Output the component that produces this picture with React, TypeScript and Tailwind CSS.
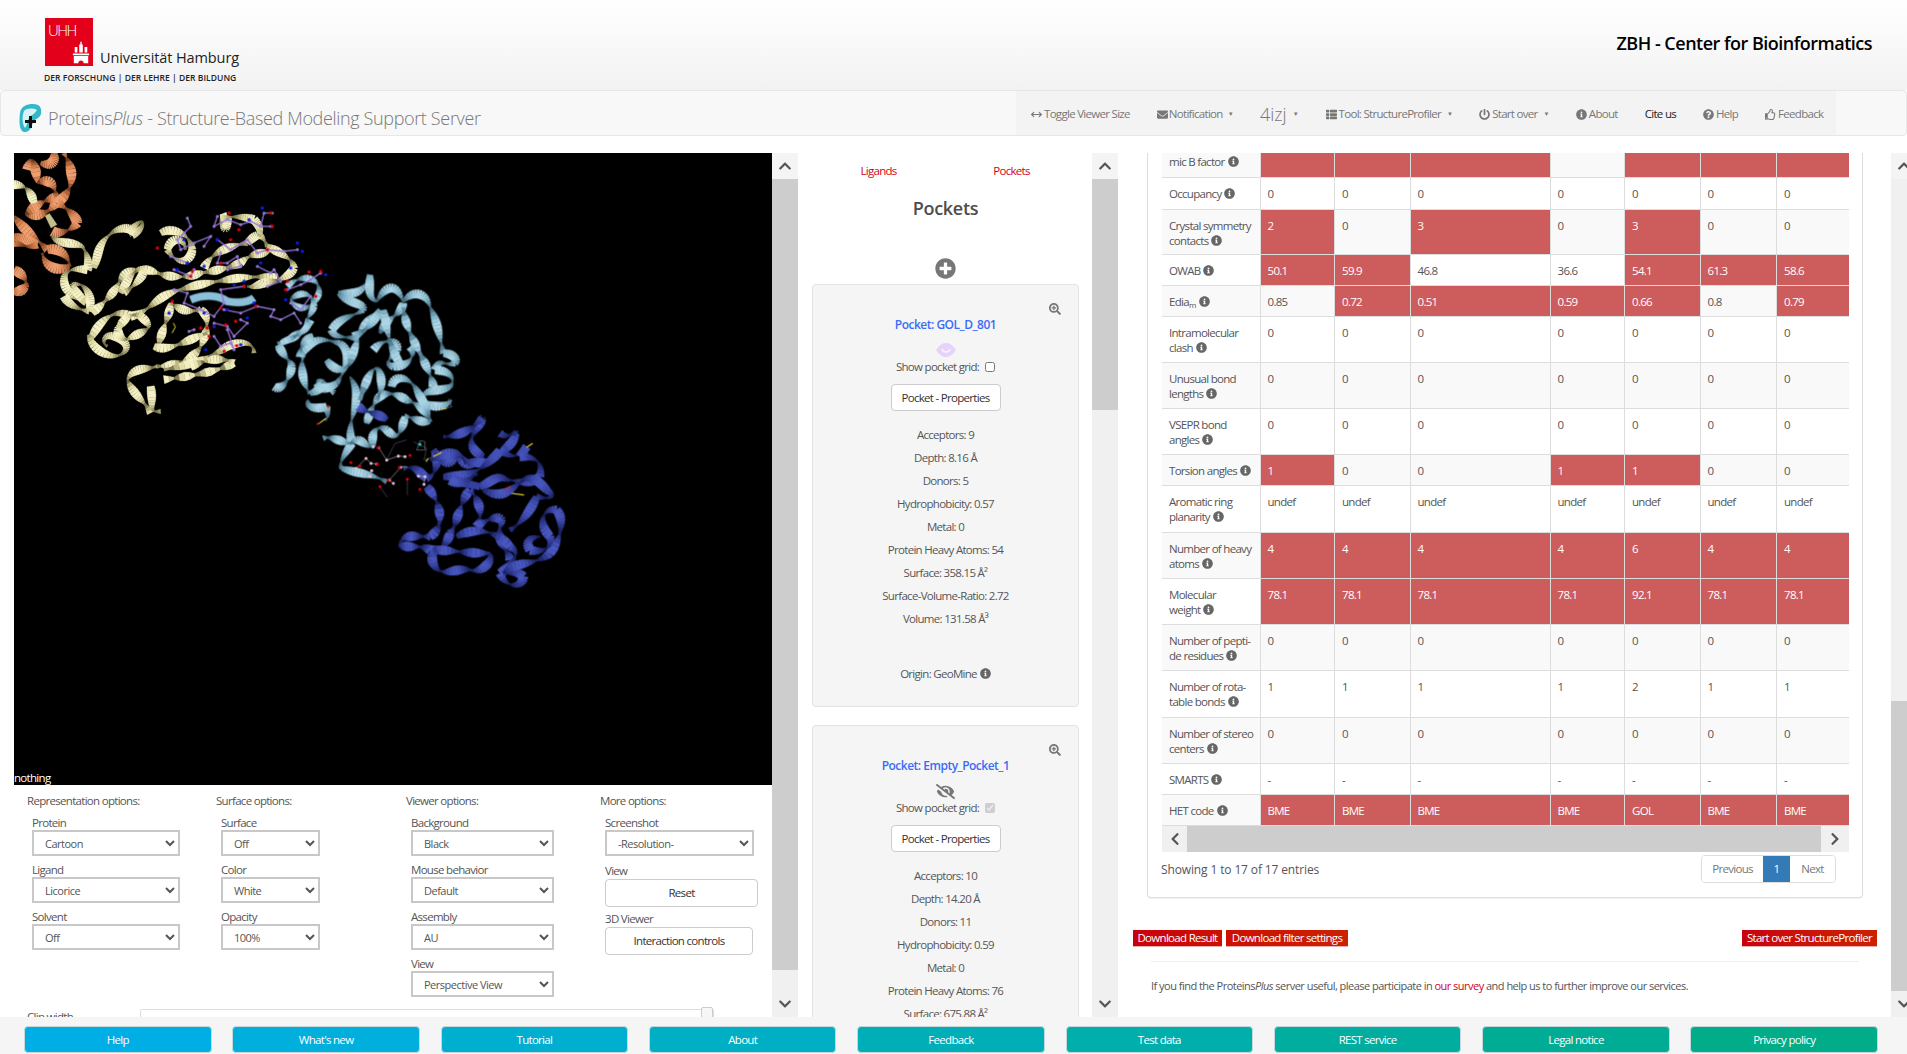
import {
  FaChevronDown,
  FaChevronLeft,
  FaChevronRight,
  FaChevronUp,
  FaEnvelope,
  FaEyeSlash,
  FaInfoCircle,
  FaPlusCircle,
  FaPowerOff,
  FaQuestionCircle,
  FaRegThumbsUp,
  FaSearchPlus,
  FaThList,
} from "react-icons/fa";
import { TbArrowsHorizontal } from "react-icons/tb";

type Row = { label: React.ReactNode; h: string; vals: string[]; red: number[]; odd: boolean };

const all = [0, 1, 2, 3, 4, 5, 6];
const zeros = ["0", "0", "0", "0", "0", "0", "0"];

const rows: Row[] = [
  { label: "mic B factor", h: "h-[24px]", vals: ["", "", "", "", "", "", ""], red: [0, 1, 2, 4, 5, 6], odd: true },
  { label: "Occupancy", h: "h-[32px]", vals: zeros, red: [], odd: false },
  { label: <>Crystal symmetry<br />contacts</>, h: "h-[45px]", vals: ["2", "0", "3", "0", "3", "0", "0"], red: [0, 2, 4], odd: true },
  { label: "OWAB", h: "h-[31px]", vals: ["50.1", "59.9", "46.8", "36.6", "54.1", "61.3", "58.6"], red: [0, 1, 4, 5, 6], odd: false },
  { label: <>Edia<sub className="text-[8px]">m</sub></>, h: "h-[31px]", vals: ["0.85", "0.72", "0.51", "0.59", "0.66", "0.8", "0.79"], red: [1, 2, 3, 4, 6], odd: true },
  { label: <>Intramolecular<br />clash</>, h: "h-[46px]", vals: zeros, red: [], odd: false },
  { label: <>Unusual bond<br />lengths</>, h: "h-[46px]", vals: zeros, red: [], odd: true },
  { label: <>VSEPR bond<br />angles</>, h: "h-[46px]", vals: zeros, red: [], odd: false },
  { label: "Torsion angles", h: "h-[31px]", vals: ["1", "0", "0", "1", "1", "0", "0"], red: [0, 3, 4], odd: true },
  { label: <>Aromatic ring<br />planarity</>, h: "h-[47px]", vals: ["undef", "undef", "undef", "undef", "undef", "undef", "undef"], red: [], odd: false },
  { label: <>Number of heavy<br />atoms</>, h: "h-[46px]", vals: ["4", "4", "4", "4", "6", "4", "4"], red: all, odd: true },
  { label: <>Molecular<br />weight</>, h: "h-[46px]", vals: ["78.1", "78.1", "78.1", "78.1", "92.1", "78.1", "78.1"], red: all, odd: false },
  { label: <>Number of pepti-<br />de residues</>, h: "h-[46px]", vals: zeros, red: [], odd: true },
  { label: <>Number of rota-<br />table bonds</>, h: "h-[47px]", vals: ["1", "1", "1", "1", "2", "1", "1"], red: [], odd: false },
  { label: <>Number of stereo<br />centers</>, h: "h-[46px]", vals: zeros, red: [], odd: true },
  { label: "SMARTS", h: "h-[31px]", vals: ["-", "-", "-", "-", "-", "-", "-"], red: [], odd: false },
  { label: "HET code", h: "h-[31px]", vals: ["BME", "BME", "BME", "BME", "GOL", "BME", "BME"], red: all, odd: true },
];

const footerLinks = [
  { label: "Help", bg: "bg-[#00aee6]" },
  { label: "What's new", bg: "bg-[#00afdc]" },
  { label: "Tutorial", bg: "bg-[#00afd0]" },
  { label: "About", bg: "bg-[#00afc4]" },
  { label: "Feedback", bg: "bg-[#00aeb8]" },
  { label: "Test data", bg: "bg-[#00aeac]" },
  { label: "REST service", bg: "bg-[#00ad9f]" },
  { label: "Legal notice", bg: "bg-[#00ad94]" },
  { label: "Privacy policy", bg: "bg-[#00ad88]" },
];

type Palette = { dark: number[]; body: number[]; light: number[] };
const orange: Palette = { dark: [110, 58, 30], body: [210, 124, 76], light: [240, 160, 112] };
const yellow: Palette = { dark: [110, 106, 66], body: [222, 217, 162], light: [247, 243, 200] };
const sky: Palette = { dark: [58, 94, 112], body: [128, 179, 201], light: [173, 215, 232] };
const navy: Palette = { dark: [24, 30, 88], body: [51, 62, 154], light: [74, 88, 194] };

const orangeTraces = [
  "M40 50 C50 10 60 0 70 90 C110 70 130 100 125 150 C100 190 50 190 35 185 C70 150 100 140 120 135",
  "M150 0 C185 60 180 110 130 150 C170 170 190 200 190 210 C170 235 130 245 115 235",
  "M0 190 C30 230 70 260 100 290 C130 280 170 310 165 340 C130 360 90 340 85 300",
  "M0 250 C30 255 50 270 70 275 C40 290 20 270 0 270",
  "M0 350 C30 365 40 385 35 400 C20 420 5 415 0 415",
  "M120 0 C125 30 110 40 80 30",
];

const yellowTraces = [
  "M0 95 C30 95 50 110 60 150",
  "M100 185 L120 220",
  "M115 250 C130 275 170 265 205 280 C225 310 225 340 220 350 C180 345 150 350 150 380 C150 420 190 440 215 450 C170 400 165 390 200 395 C225 410 235 440 225 475 C190 470 160 450 150 430",
  "M240 345 C255 300 250 270 300 235 C330 220 360 225 345 240 C340 250 365 205 385 205 C390 220 370 240 355 245",
  "M235 480 C280 440 300 420 320 380 C340 345 380 340 430 360 C470 375 520 375 560 360 C600 355 640 345 680 330 C720 290 750 310 770 290",
  "M320 420 C340 380 370 340 385 350 C400 360 360 400 330 420",
  "M230 560 C250 510 300 460 350 490 C400 480 420 440 470 420 C520 400 580 390 640 380 C700 370 760 370 790 375",
  "M225 545 C230 590 290 620 320 605 C350 590 340 560 300 550 C270 540 260 570 280 580",
  "M310 530 C340 480 370 470 400 510 C420 530 370 540 340 560 C320 560 300 530 320 520",
  "M570 345 C590 300 640 280 700 270 C730 240 740 235 760 280 C800 300 840 320 840 345 C830 370 790 385 750 390 C730 395 720 405 700 400",
  "M440 240 C470 220 530 240 535 290 C530 330 490 340 460 290 C470 250 510 250 515 290",
  "M620 190 C630 240 640 240 640 190 M620 195 C660 190 690 190 720 200 C740 220 740 240 735 250",
  "M430 590 C440 540 470 480 470 450 C500 470 520 480 560 470 C590 490 580 540 560 580 C540 620 480 640 430 640",
  "M430 640 C400 650 360 640 340 680 C360 730 390 740 410 780",
  "M410 700 C420 760 400 780 440 775",
  "M450 650 C520 640 600 610 640 580 C690 560 720 570 720 600",
  "M450 680 C520 670 600 660 660 630 C620 610 580 620 530 640",
  "M420 580 C460 600 520 560 580 540",
];

const skyOverTraces = [
  "M820 400 C860 360 920 370 915 420 C900 470 850 480 830 440 C860 410 900 420 900 460 C890 490 870 500 885 510 C880 530 850 550 800 570",
];

const ligandLines = [
  "M470 310 L520 330",
  "M520 195 L530 220 L510 240 L490 260 L500 290 L540 270 L590 250 L570 280",
  "M610 190 L600 220 L640 200 L680 215 L710 205 L740 220 L750 180 L775 180",
  "M740 220 L770 220",
  "M610 260 L650 290 L700 260 L730 300 L760 290 L810 295 L850 290",
  "M620 300 L610 330 L640 330 L670 310 L680 340 L640 350",
  "M730 340 L770 360 L780 350 L800 385 L760 400",
  "M480 350 L530 370 L540 350",
  "M480 410 L520 420 L510 450 L560 470 L600 490 L630 450 L620 410 L690 400",
  "M630 470 L680 480 L730 460 L780 470 L770 490 L800 500 L840 480 L860 510",
  "M820 410 L860 395 L890 380 L920 360",
  "M830 450 L860 470 L890 430",
  "M600 510 L640 520 L660 550 L700 510 L680 500",
  "M600 550 L620 580 L650 570 L660 590 L640 530",
  "M525 535 L540 530",
];

const redDots = [
  [430, 285], [535, 355], [620, 330], [645, 180], [675, 230], [770, 180], [775, 220], [760, 290], [820, 385],
  [885, 357], [920, 355], [475, 445], [620, 465], [580, 525], [600, 520], [635, 515], [665, 505], [630, 595],
  [668, 578], [585, 550], [725, 460], [690, 400], [815, 410], [905, 430], [560, 525], [650, 260], [530, 370],
];

const blueDots = [
  [745, 165], [850, 270], [865, 295], [705, 200], [610, 260], [520, 330], [510, 260], [830, 345], [690, 385],
  [570, 340], [740, 330], [570, 480], [600, 520], [640, 470], [700, 495], [720, 450], [680, 575], [935, 365],
  [815, 440], [575, 590], [490, 350], [465, 480], [660, 395],
];

const skyTraces = [
  "M120 180 C110 210 60 240 25 255 C40 290 65 305 65 320 C60 360 30 395 12 380",
  "M100 285 C90 320 100 380 120 400 C160 390 170 360 140 365 C170 380 195 385 180 395",
  "M115 420 C105 440 135 450 170 440 C170 455 180 470 165 480",
  "M90 290 C130 220 170 240 210 250 C240 270 240 310 200 370 C170 390 150 390 140 370",
  "M130 230 C100 240 90 260 90 290",
  "M170 300 C190 330 220 340 240 310 C260 250 270 190 330 150 C310 190 290 210 250 230",
  "M205 100 C240 100 280 110 300 45 C300 80 290 110 320 125 C350 70 380 70 400 125 C430 85 470 100 480 140 C500 180 510 230 520 280 C550 280 565 300 555 310 C520 320 510 290 495 330 C540 330 560 360 540 380 C500 400 470 380 450 420 C470 440 520 450 545 420",
  "M205 100 C230 130 290 130 280 150 C250 170 210 170 185 210 C190 235 230 230 260 235",
  "M330 220 C350 170 390 170 400 130 C400 190 430 240 460 300 C480 340 490 370 490 380",
  "M310 270 C340 230 390 240 380 270 C360 300 340 310 370 320 C420 320 440 280 420 260",
  "M340 150 C350 200 360 270 390 310",
  "M240 350 C270 400 260 420 245 480 C240 510 240 520 245 550 C220 590 205 610 215 625 C260 640 300 640 350 665",
  "M160 535 C180 525 220 550 245 550 C270 520 290 570 310 560 C300 520 320 490 350 510 C380 540 390 530 405 470 C430 470 450 490 480 485 C470 450 440 430 410 420 C380 400 340 390 320 420 C300 450 290 490 290 490",
  "M270 420 C300 320 320 310 330 340 C340 380 330 400 320 420",
  "M365 380 C370 340 420 350 440 390 C460 430 480 450 480 485",
];

const navyTraces = [
  "M265 440 C290 460 330 460 350 480",
  "M400 625 C440 615 450 640 470 655 C500 650 510 590 490 570 C520 620 550 620 560 570 C580 630 610 620 640 590 C600 570 590 540 630 490 C640 470 640 470 610 500 C580 520 550 530 520 530",
  "M480 600 C530 580 560 560 590 610 C620 600 640 620 670 600 C700 560 720 570 740 520 C735 510 715 540 690 520",
  "M520 650 C580 650 610 640 640 620 C660 600 680 590 690 570 C720 590 740 600 770 560 M750 590 C790 590 820 600 810 650 C770 680 750 660 710 660 C680 640 660 670 630 680 M540 660 C570 680 600 660 620 640",
  "M470 680 C510 720 530 800 480 830 C440 830 400 820 390 850 C400 870 450 850 480 870 C500 870 530 860 540 820 C560 800 570 720 600 690 C630 720 640 770 620 800 C660 770 710 760 690 800 C680 850 720 880 720 900",
  "M490 870 C540 870 590 880 660 880 C670 900 640 940 600 930 C560 920 510 960 490 910 C480 890 490 880 500 870",
  "M560 830 C610 800 680 810 720 860 C760 880 720 920 690 940 C710 990 760 980 760 950 C740 930 720 940 700 940 C740 900 790 920 840 880 C880 830 880 770 860 750 C820 740 800 790 840 830 C850 860 820 880 780 870 C760 840 790 830 810 830",
  "M640 690 C700 720 720 690 760 660 C790 640 820 680 830 690 C860 710 840 720 800 710 C780 760 740 800 720 810",
];

const pinkDots = [
  [258, 625], [288, 595], [303, 610], [320, 612], [305, 632], [300, 648], [326, 563], [350, 600], [385, 588],
  [405, 590], [445, 648], [465, 650], [462, 673], [370, 670], [358, 660], [392, 622], [310, 560],
];
const intRed = [
  [243, 608], [270, 618], [322, 612], [330, 680], [412, 657], [355, 660], [388, 622], [450, 688], [325, 563], [420, 586],
];

// walk an M/L/C path and return points spaced along it
function samplePath(d: string): number[][] {
  const tokens = d.match(/[MLC]|-?[\d.]+/g) ?? [];
  const pts: number[][] = [];
  let i = 0;
  let cmd = "M";
  let x = 0;
  let y = 0;
  while (i < tokens.length) {
    if (/[MLC]/.test(tokens[i])) cmd = tokens[i++];
    if (cmd === "C") {
      const [x1, y1, x2, y2, x3, y3] = tokens.slice(i, i + 6).map(Number);
      i += 6;
      for (let s = 1; s <= 14; s++) {
        const t = s / 14;
        const u = 1 - t;
        pts.push([
          u * u * u * x + 3 * u * u * t * x1 + 3 * u * t * t * x2 + t * t * t * x3,
          u * u * u * y + 3 * u * u * t * y1 + 3 * u * t * t * y2 + t * t * t * y3,
        ]);
      }
      x = x3;
      y = y3;
    } else {
      x = Number(tokens[i++]);
      y = Number(tokens[i++]);
      pts.push([x, y]);
    }
  }
  return pts;
}

function mix(a: number[], b: number[], t: number) {
  return `rgb(${a.map((v, i) => Math.round(v + (b[i] - v) * t)).join(",")})`;
}

// twisted cartoon strand: width and shade follow a cosine along the trace
function Ribbons({ traces, color, w }: { traces: string[]; color: Palette; w: number }) {
  const quads: { d: string; fill: string }[] = [];
  traces.forEach((trace, index) => {
    const pts = samplePath(trace);
    const period = 70 + (index % 4) * 22;
    let run = index * 31;
    for (let i = 0; i < pts.length - 1; i++) {
      const [ax, ay] = pts[i];
      const [bx, by] = pts[i + 1];
      const len = Math.hypot(bx - ax, by - ay) || 1;
      const nx = -(by - ay) / len;
      const ny = (bx - ax) / len;
      const c0 = Math.abs(Math.cos((run / period) * Math.PI));
      run += len;
      const c1 = Math.abs(Math.cos((run / period) * Math.PI));
      const w0 = 2 + w * c0;
      const w1 = 2 + w * c1;
      const shade = c0 > 0.65 ? mix(color.body, color.light, (c0 - 0.65) / 0.35) : mix(color.dark, color.body, c0 / 0.65);
      quads.push({
        d: `M${ax + nx * w0} ${ay + ny * w0} L${bx + nx * w1} ${by + ny * w1} L${bx - nx * w1} ${by - ny * w1} L${ax - nx * w0} ${ay - ny * w0} Z`,
        fill: shade,
      });
    }
  });
  return (
    <g>
      {quads.map((q, i) => (
        <path key={i} d={q.d} fill={q.fill} stroke={q.fill} strokeWidth="1" />
      ))}
    </g>
  );
}

function Molecule() {
  return (
    <svg viewBox="0 0 758 632" className="block h-full w-full">
      <defs>
        <filter id="soft">
          <feGaussianBlur stdDeviation="0.35" />
        </filter>
      </defs>
      <g filter="url(#soft)">
        <g transform="scale(0.3333)">
          <Ribbons traces={orangeTraces} color={orange} w={13} />
          <Ribbons traces={yellowTraces} color={yellow} w={11} />
        </g>
        <g transform="translate(256 107) scale(0.3333)">
          <Ribbons traces={skyTraces} color={sky} w={11} />
          <Ribbons traces={navyTraces} color={navy} w={12} />
          <g fill="none" stroke="#a9a59b" strokeWidth="2">
            <path d="M258 625 L288 595 L303 610 L320 612 M305 632 L300 648 M326 563 L350 600 L385 588 L405 590 M445 648 L465 650 L462 673 M370 670 L358 660 L392 622 L412 620" />
            <path d="M350 600 L375 550 L410 540 M430 545 L470 565 L462 600 L490 590 M330 680 L352 712 M412 657 L412 705" stroke="#5a4f66" />
            <path d="M515 448 L545 440 L535 415 M450 542 L440 570 L465 570 L465 545 Z" stroke="#79808c" />
          </g>
          {pinkDots.map(([x, y]) => <circle key={`${x}-${y}`} cx={x} cy={y} r="4.5" fill="#e6c4e2" />)}
          {intRed.map(([x, y]) => <circle key={`${x}-${y}`} cx={x} cy={y} r="4.5" fill="#e3000f" />)}
          <circle cx="450" cy="553" r="4.5" fill="#1ecfd0" />
          <path d="M145 492 L168 475 M490 590 L515 577 M468 605 L475 595 M770 562 L788 550 M725 700 L762 705 M515 448 L530 445" stroke="#e6d436" strokeWidth="3.5" fill="none" />
          <path d="M140 494 L150 487 M705 692 L720 678" stroke="#d22a1c" strokeWidth="3.5" />
          <circle cx="175" cy="440" r="4" fill="#d22a1c" />
        </g>
        <g transform="scale(0.3333)">
          <path d="M530 440 C580 420 620 430 640 445 C670 450 700 450 720 435" fill="none" stroke="#4d7a90" strokeWidth="25" />
          <path d="M530 440 C580 420 620 430 640 445 C670 450 700 450 720 435" fill="none" stroke="#8cc0d8" strokeWidth="21" />
          <Ribbons traces={skyOverTraces} color={sky} w={8} />
          <g fill="none" stroke="#9170d2" strokeWidth="4">
            {ligandLines.map((d) => <path key={d} d={d} />)}
          </g>
          {ligandLines.flatMap((d) => samplePath(d)).map(([x, y], i) => <circle key={i} cx={x} cy={y} r="4.5" fill="#9a7bdc" />)}
          {redDots.map(([x, y]) => <circle key={`${x}-${y}`} cx={x} cy={y} r="5" fill="#e00012" />)}
          {blueDots.map(([x, y]) => <circle key={`${x}-${y}`} cx={x} cy={y} r="5" fill="#0c1be6" />)}
          <path d="M478 510 L484 522 L474 540" stroke="#eadb32" strokeWidth="3" fill="none" />
        </g>
      </g>
    </svg>
  );
}

function Scrollbar({ before, thumb }: { before: string; thumb: string }) {
  return (
    <div className="flex h-full w-[26px] shrink-0 flex-col bg-[#f0f0f0]">
      <div className="flex h-[26px] shrink-0 items-center justify-center bg-[#f4f4f4]">
        <FaChevronUp className="text-[14px] text-[#555]" />
      </div>
      <div className={before} />
      <div className={`${thumb} bg-[#cdcdcd]`} />
      <div className="flex-1" />
      <div className="flex h-[26px] shrink-0 items-center justify-center bg-[#f0f0f0]">
        <FaChevronDown className="text-[14px] text-[#555]" />
      </div>
    </div>
  );
}

function Info() {
  return <FaInfoCircle className="ml-[3px] inline-block align-[-1px] text-[11px] text-[#666]" />;
}

function Field({ label, value, w }: { label: string; value: string; w: string }) {
  return (
    <div className="mb-[7px] pl-[5px]">
      <div className="h-[14px] leading-[14px]">{label}</div>
      <select className={`${w} block h-[26px] rounded-none border-2 border-[#c8c8c8] bg-white pl-[7px] text-[11px] tracking-[-0.5px] text-[#555]`} defaultValue={value}>
        <option>{value}</option>
      </select>
    </div>
  );
}

function Pocket({ title, eye, checked, stats }: { title: string; eye: "open" | "closed"; checked: boolean; stats: string[] }) {
  return (
    <div className="relative mb-[18px] w-[267px] rounded-[4px] border border-[#e3e3e3] bg-[#f5f5f5] pt-[32px] pb-[21px] text-center">
      <FaSearchPlus className="absolute top-[18px] right-[17px] text-[12px] text-[#777]" />
      <div className="h-[16px] text-[12px] leading-[16px] font-semibold tracking-[-0.5px] text-[#3b6cf6]">{title}</div>
      <div className="mt-[8px] flex h-[18px] items-center justify-center">
        {eye === "open" ? (
          <svg width="20" height="14" viewBox="0 0 20 14">
            <path d="M0 7 C4 1 7 0 10 0 C13 0 16 1 20 7 C16 13 13 14 10 14 C7 14 4 13 0 7 Z" fill="#e5d3fb" />
            <path d="M6 6 C7 10 13 10 14 6" fill="none" stroke="#f5f5f5" strokeWidth="1.5" />
          </svg>
        ) : (
          <FaEyeSlash className="text-[19px] text-[#777]" />
        )}
      </div>
      <div className="flex h-[16px] items-center justify-center gap-[6px] leading-[16px]">
        Show pocket grid:
        <input type="checkbox" readOnly checked={checked} disabled={checked} className="h-[10px] w-[10px]" />
      </div>
      <button className="mx-auto mt-[9px] block h-[27px] w-[110px] rounded-[4px] border border-[#ccc] bg-white text-[#333]">Pocket - Properties</button>
      <div className="mt-[12px]">
        {stats.map((s) => (
          <div key={s} className="h-[23px] leading-[23px]">{s}</div>
        ))}
      </div>
      <div className="mt-[32px] h-[23px] leading-[23px]">Origin: GeoMine<Info /></div>
    </div>
  );
}

export default function App() {
  return (
    <div className="flex h-screen w-full flex-col overflow-hidden bg-white font-['Open_Sans',sans-serif] text-[11.5px] tracking-[-0.7px] whitespace-nowrap text-[#555]">
      {/* University header */}
      <header className="flex h-[90px] shrink-0 justify-between bg-gradient-to-b from-white to-[#f2f2f2] pt-[18px] pr-[35px] pl-[45px]">
        <div>
          <div className="flex items-end">
            <div className="relative h-[48px] w-[48px] bg-[#e2001a]">
              <span className="absolute top-[1px] left-[3px] text-[15px] font-light tracking-[-1.5px] text-white">UHH</span>
              <svg viewBox="0 0 20 24" className="absolute right-[3px] bottom-[2px] h-[23px] w-[18px]" fill="white">
                <path d="M1 13 H19 V15 H1 Z M2 16 H18 V24 H13 C13 20 7 20 7 24 H2 Z M9.2 0 H10.8 V3 H12 V12 H8 V3 H9.2 Z M3 6 H6 V12 H3 Z M14 6 H17 V12 H14 Z" />
              </svg>
            </div>
            <span className="ml-[7px] text-[14.5px] leading-[17px] tracking-[-0.1px] text-[#222]">Universität Hamburg</span>
          </div>
          <div className="mt-[6px] -ml-[1px] text-[8.5px] font-semibold tracking-[0.05px] text-[#222]">DER FORSCHUNG | DER LEHRE | DER BILDUNG</div>
        </div>
        <div className="pt-[14px] text-[18px] leading-[22px] font-semibold tracking-[-0.5px] text-black">ZBH - Center for Bioinformatics</div>
      </header>

      {/* Navbar */}
      <nav className="flex h-[46px] shrink-0 rounded-[4px] border border-[#e7e7e7] bg-[#f8f8f8] pr-[70px]">
        <div className="flex items-center pt-[10px] pl-[17px]">
          <svg viewBox="0 0 24 29" className="h-[29px] w-[24px]">
            <path d="M2 9 C3 2 9 0 15 0 C22 0 24 4 23 10 C22 14 17 15 15 18 C14 23 11 29 6 28 C1 27 1 16 2 9 Z" fill="#34b7c9" />
            <path d="M6 7 C9 4 15 4 19 6 C17 10 13 11 11 14 C9 18 9 22 7 24 C4 20 4 12 6 7 Z" fill="#d6f3f7" />
            <path d="M11 12 H14 V16 H18 V19 H14 V24 H11 V19 H7 V16 H11 Z" fill="#111" />
          </svg>
          <span className="ml-[6px] text-[18px] font-light tracking-[-0.35px] text-[#777]">
            Proteins<i>Plus</i> - Structure-Based Modeling Support Server
          </span>
        </div>
        <div className="ml-auto flex w-[820px] items-center gap-[27px] bg-[#f3f3f3] pt-[2px] pl-[14px] text-[#777]">
          <span className="flex items-center gap-[1px]"><TbArrowsHorizontal className="text-[13px]" />Toggle Viewer Size</span>
          <span className="flex items-center gap-[1px]"><FaEnvelope className="text-[11px]" />Notification <small className="ml-[4px] text-[6px]">▼</small></span>
          <span className="flex items-center text-[18px] font-light tracking-normal">4izj <small className="ml-[6px] text-[6px]">▼</small></span>
          <span className="flex items-center gap-[2px]"><FaThList className="text-[11px]" />Tool: StructureProfiler <small className="ml-[4px] text-[6px]">▼</small></span>
          <span className="flex items-center gap-[2px]"><FaPowerOff className="text-[11px]" />Start over <small className="ml-[4px] text-[6px]">▼</small></span>
          <span className="flex items-center gap-[2px]"><FaInfoCircle className="text-[11px]" />About</span>
          <span className="text-[#222]">Cite us</span>
          <span className="flex items-center gap-[2px]"><FaQuestionCircle className="text-[11px]" />Help</span>
          <span className="flex items-center gap-[2px]"><FaRegThumbsUp className="text-[11px]" />Feedback</span>
        </div>
      </nav>

      {/* Three scrolling panels */}
      <main className="mt-[17px] flex h-[864px] shrink-0 overflow-hidden pl-[14px]">
        <section className="w-[758px] shrink-0 overflow-hidden">
          <div className="relative h-[632px] bg-black">
            <Molecule />
            <span className="absolute bottom-0 left-0 leading-[14px] text-white">nothing</span>
          </div>
          <div className="grid grid-cols-[189px_190px_194px_1fr] pt-[8px] pl-[13px]">
            <div>
              <div className="mb-[8px] h-[15px] leading-[16px]">Representation options:</div>
              <Field label="Protein" value="Cartoon" w="w-[148px]" />
              <Field label="Ligand" value="Licorice" w="w-[148px]" />
              <Field label="Solvent" value="Off" w="w-[148px]" />
            </div>
            <div>
              <div className="mb-[8px] h-[15px] leading-[16px]">Surface options:</div>
              <Field label="Surface" value="Off" w="w-[99px]" />
              <Field label="Color" value="White" w="w-[99px]" />
              <Field label="Opacity" value="100%" w="w-[99px]" />
            </div>
            <div>
              <div className="mb-[8px] h-[15px] leading-[16px]">Viewer options:</div>
              <Field label="Background" value="Black" w="w-[143px]" />
              <Field label="Mouse behavior" value="Default" w="w-[143px]" />
              <Field label="Assembly" value="AU" w="w-[143px]" />
              <Field label="View" value="Perspective View" w="w-[143px]" />
            </div>
            <div>
              <div className="mb-[8px] h-[15px] leading-[16px]">More options:</div>
              <Field label="Screenshot" value="-Resolution-" w="w-[149px]" />
              <div className="pl-[5px]">
                <div className="h-[15px] leading-[15px]">View</div>
                <button className="mt-[1px] h-[28px] w-[153px] rounded-[4px] border border-[#ccc] bg-white text-[#333]">Reset</button>
                <div className="mt-[4px] h-[15px] leading-[15px]">3D Viewer</div>
                <button className="mt-[1px] h-[28px] w-[148px] rounded-[4px] border border-[#ccc] bg-white text-[#333]">Interaction controls</button>
              </div>
            </div>
          </div>
          <div className="mt-[2px] flex pl-[13px]">
            <span className="w-[113px] pt-[3px] leading-[16px]">Clip width</span>
            <div className="relative mt-[3px] h-[9px] w-[574px] rounded-[2px] border border-[#ddd] bg-white">
              <div className="absolute -top-[3px] right-0 h-[13px] w-[12px] rounded-[2px] border border-[#ccc] bg-[#f6f6f6]" />
            </div>
          </div>
        </section>

        <Scrollbar before="h-0" thumb="h-[791px]" />

        <section className="w-[294px] shrink-0 overflow-hidden pl-[14px]">
          <div className="flex h-[35px] items-center text-[#d0021b]">
            <span className="w-[133px] text-center">Ligands</span>
            <span className="w-[133px] text-center">Pockets</span>
          </div>
          <h2 className="mt-[7px] w-[267px] text-center text-[18px] leading-[26px] font-semibold tracking-[-0.3px] text-[#4d4d4d]">Pockets</h2>
          <div className="mt-[37px] mb-[5px] flex w-[267px] justify-center">
            <FaPlusCircle className="text-[21px] text-[#777]" />
          </div>
          <Pocket
            title="Pocket: GOL_D_801"
            eye="open"
            checked={false}
            stats={["Acceptors: 9", "Depth: 8.16 Å", "Donors: 5", "Hydrophobicity: 0.57", "Metal: 0", "Protein Heavy Atoms: 54", "Surface: 358.15 Å²", "Surface-Volume-Ratio: 2.72", "Volume: 131.58 Å³"]}
          />
          <Pocket
            title="Pocket: Empty_Pocket_1"
            eye="closed"
            checked
            stats={["Acceptors: 10", "Depth: 14.20 Å", "Donors: 11", "Hydrophobicity: 0.59", "Metal: 0", "Protein Heavy Atoms: 76", "Surface: 675.88 Å²", "Surface-Volume-Ratio: 2.72", "Volume: 248.00 Å³"]}
          />
        </section>

        <Scrollbar before="h-0" thumb="h-[231px]" />

        <section className="w-[773px] shrink-0 overflow-hidden pr-[14px] pl-[15px]">
          <div className="ml-[14px] w-[716px] rounded-b-[4px] border-x border-b border-[#ddd] pr-[16px] pb-[14px] pl-[14px] shadow-[0_1px_1px_rgba(0,0,0,0.05)]">
            <table className="w-[687px] table-fixed border-collapse">
              <colgroup>
                <col className="w-[98px]" />
                <col className="w-[74.5px]" />
                <col className="w-[75.5px]" />
                <col className="w-[140px]" />
                <col className="w-[74.5px]" />
                <col className="w-[75.5px]" />
                <col className="w-[76.5px]" />
                <col className="w-[72.5px]" />
              </colgroup>
              <tbody>
                {rows.map((row, i) => (
                  <tr key={i} className={`${row.h} ${row.odd ? "bg-[#f9f9f9]" : "bg-white"}`}>
                    <td className={`border-r border-b border-[#ddd] px-[7px] align-top leading-[15px] whitespace-nowrap ${i === 0 ? "pt-[1px]" : "pt-[8px]"}`}>
                      {row.label}
                      <Info />
                    </td>
                    {row.vals.map((v, c) => (
                      <td
                        key={c}
                        className={`border-b border-[#ddd] px-[7px] pt-[8px] align-top leading-[15px] ${c < 6 ? "border-r" : ""} ${row.red.includes(c) ? "bg-[#cd5c5c] text-white" : ""}`}
                      >
                        {v}
                      </td>
                    ))}
                  </tr>
                ))}
              </tbody>
            </table>
            <div className="flex h-[26px] w-[687px] items-stretch bg-[#f0f0f0]">
              <div className="flex w-[25px] items-center justify-center"><FaChevronLeft className="text-[14px] text-[#555]" /></div>
              <div className="flex-1 bg-[#cdcdcd]" />
              <div className="flex w-[28px] items-center justify-center"><FaChevronRight className="text-[14px] text-[#555]" /></div>
            </div>
            <div className="mt-[3px] flex items-start justify-between">
              <span className="-ml-[1px] pt-[7px] text-[12px] leading-[16px] tracking-[-0.13px]">Showing 1 to 17 of 17 entries</span>
              <div className="mr-[10px] flex h-[28px] overflow-hidden rounded-[4px] border border-[#ddd] text-[#777]">
                <span className="flex w-[61px] items-center justify-center bg-white">Previous</span>
                <span className="flex w-[27px] items-center justify-center bg-[#337ab7] text-white">1</span>
                <span className="flex w-[45px] items-center justify-center bg-white">Next</span>
              </div>
            </div>
          </div>

          <div className="mt-[32px] flex justify-between">
            <div className="flex gap-[4px]">
              <a className="flex h-[17px] w-[89px] items-center justify-center border-b border-[#e8b0b0] bg-gradient-to-r from-[#c9000f] to-[#cc1000] text-white">Download Result</a>
              <a className="flex h-[17px] w-[122px] items-center justify-center border-b border-[#e8b0b0] bg-gradient-to-r from-[#cc1000] to-[#cc2000] text-white">Download filter settings</a>
            </div>
            <a className="flex h-[17px] w-[135px] items-center justify-center border-b border-[#e8b0b0] bg-gradient-to-r from-[#c9000f] to-[#cc2000] text-white">Start over StructureProfiler</a>
          </div>
          <hr className="mx-[18px] mt-[14px] border-[#eee]" />
          <p className="mt-[16px] ml-[18px] text-[11px] leading-[16px] tracking-[-0.52px]">
            If you find the Proteins<i>Plus</i> server useful, please participate in <span className="text-[#d0021b]">our survey</span> and help us to further improve our services.
          </p>
        </section>

        <Scrollbar before="h-[522px]" thumb="h-[290px]" />
      </main>

      {/* Footer links */}
      <footer className="h-[37px] shrink-0 overflow-hidden bg-[#f5f5f5] pt-[9px] pr-[29px] pl-[24px]">
        <div className="grid grid-cols-9 gap-[20.8px]">
          {footerLinks.map((link) => (
            <div key={link.label} className={`${link.bg} flex h-[27px] items-center justify-center rounded-[4px] border border-[#c6d8dc] text-[11.5px] text-white`}>
              {link.label}
            </div>
          ))}
        </div>
      </footer>
    </div>
  );
}
